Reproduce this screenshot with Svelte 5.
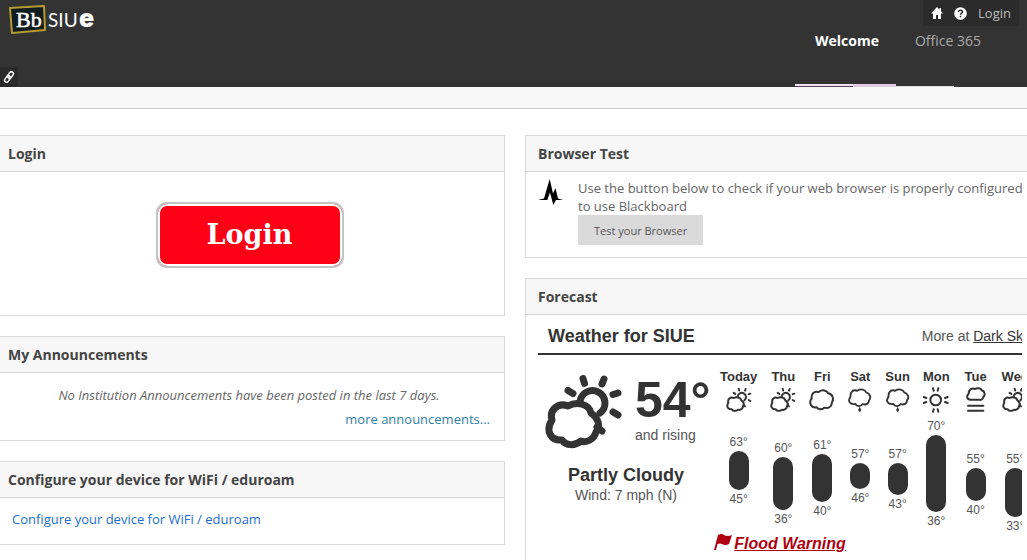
<script lang="ts">
  type Sky = 'partly' | 'cloudy' | 'rain' | 'sun' | 'fog';

  interface Day {
    name: string;
    sky: Sky;
    high: number;
    low: number;
    top: number;
    height: number;
  }

  // top and height place each temperature bar on the shared scale
  const days: Day[] = [
    { name: 'Today', sky: 'partly', high: 63, low: 45, top: 16, height: 39 },
    { name: 'Thu', sky: 'partly', high: 60, low: 36, top: 22, height: 53 },
    { name: 'Fri', sky: 'cloudy', high: 61, low: 40, top: 19, height: 48 },
    { name: 'Sat', sky: 'rain', high: 57, low: 46, top: 28, height: 26 },
    { name: 'Sun', sky: 'rain', high: 57, low: 43, top: 28, height: 32 },
    { name: 'Mon', sky: 'sun', high: 70, low: 36, top: 0, height: 77 },
    { name: 'Tue', sky: 'fog', high: 55, low: 40, top: 33, height: 33 },
    { name: 'Wed', sky: 'partly', high: 55, low: 33, top: 33, height: 49 },
  ];
</script>

{#snippet skyIcon(sky: Sky)}
  <svg class="sky {sky}" viewBox="1 0 78 74" aria-hidden="true">
    {#if sky === 'partly'}
      <path d="M36 27A12.500 12.500 0 1 1 56 38" />
      <path d="M39 3.500l1.500 5M60 4l-2 5M24 15.500l5 3M69 19.500l5-1.500M69 37l5 3" />
      <path d="M8 45C5 35 14 27 24 31C33 26 45 29 47 38C54 43 57 50 52 57C50 65 42 68 37 66C31 71 22 71 18 65C7 66 1 56 8 45Z" />
      <path d="M53 52l5 4" />
    {:else if sky === 'cloudy'}
      <path d="M9 32C7 18 17 9 30 13C40 5 55 7 58 17C70 17 77 33 70 44C69 58 58 64 47 60C39 67 28 66 24 59C8 62-1 46 9 32Z" />
    {:else if sky === 'rain'}
      <path d="M9 27C8 10 18 2 31 7C43-1 57 3 60 12C72 15 78 29 69 38C70 49 59 54 49 50C42 60 29 58 25 50C7 53-1 40 9 27Z" />
      <path class="drop" d="M39 62q8 8 0 13q-8-5 0-13Z" />
    {:else if sky === 'sun'}
      <circle cx="39" cy="37" r="16" />
      <path d="M31 2l2 7M47 2l-2 7M31 72l2-7M47 72l-2-7M3 28l8 3M3 46l8-3M75 28l-8 3M75 46l-8-3" />
    {:else}
      <path d="M18 18C18 6 27 0 36 4C46-1 55 2 57 8C67 10 68 24 62 28C61 36 53 38 49 36H25C13 37 10 25 18 18Z" />
      <path d="M16 54h46M16 69h46" />
    {/if}
  </svg>
{/snippet}

<header class="top">
  <div class="brand">
    <a class="logo" href="#home" aria-label="Blackboard SIUe">
      <svg width="100" height="32" viewBox="0 0 100 32" aria-hidden="true">
        <path d="M3 4L37 2L38 26L5 29Z" fill="#111c20" stroke="#b49a2e" stroke-width="2" stroke-linejoin="round" />
        <text class="bb" x="9" y="23">Bb</text>
        <text class="siu" x="41" y="23">SIU</text>
        <text class="big-e" x="72" y="23">e</text>
      </svg>
    </a>
    <button class="quick" aria-label="Quick links">
      <svg width="12" height="12" viewBox="0 0 12 12" aria-hidden="true">
        <g fill="none" stroke="#fff" stroke-width="1.500">
          <rect x="5.500" y="0.500" width="4" height="7" rx="2" transform="rotate(35 7.500 4)" />
          <rect x="2.500" y="4.500" width="4" height="7" rx="2" transform="rotate(35 4.500 8)" />
        </g>
      </svg>
    </button>
  </div>

  <div class="side">
    <div class="tools">
      <a href="#home" aria-label="Home">
        <svg width="12" height="12" viewBox="0 0 12 12" aria-hidden="true">
          <path d="M6 0L0 6.500H2V12H5V8H7V12H10V6.500H12L10 4.300V1H8.500V2.700Z" fill="#fff" />
        </svg>
      </a>
      <a href="#help" aria-label="Help">
        <svg width="13" height="13" viewBox="0 0 13 13" aria-hidden="true">
          <circle cx="6.500" cy="6.500" r="6.300" fill="#fff" />
          <path d="M4.500 5C4.500 2.500 8.500 2.500 8.500 5C8.500 6.300 6.500 6 6.500 7.800M6.500 8.800V10.300" fill="none" stroke="#2b2b2b" stroke-width="1.500" />
        </svg>
      </a>
      <a class="signin" href="#login">Login</a>
    </div>
    <nav class="tabs">
      <a class="active" href="#welcome">Welcome</a>
      <a href="#office">Office 365</a>
    </nav>
    <div class="stripe"><span></span><span></span><span></span></div>
  </div>
</header>
<div class="subbar"></div>

<main>
  <div class="column left">
    <section class="panel">
      <h2>Login</h2>
      <div class="login-body">
        <button class="login">Login</button>
      </div>
    </section>

    <section class="panel">
      <h2>My Announcements</h2>
      <div class="news">
        <p>No Institution Announcements have been posted in the last 7 days.</p>
        <a href="#announcements">more announcements...</a>
      </div>
    </section>

    <section class="panel">
      <h2>Configure your device for WiFi / eduroam</h2>
      <div class="wifi">
        <a href="#wifi">Configure your device for WiFi / eduroam</a>
      </div>
    </section>
  </div>

  <div class="column right">
    <section class="panel">
      <h2>Browser Test</h2>
      <div class="test">
        <svg width="26" height="26" viewBox="0 0 26 26" aria-hidden="true">
          <path d="M0 21L6 19.500L11.700 0L15 14.500L17.500 9L20 19.500L25 21H18L15.300 26L12 13.500L9.300 21Z" />
        </svg>
        <div>
          <p>Use the button below to check if your web browser is properly configured to use Blackboard</p>
          <button>Test your Browser</button>
        </div>
      </div>
    </section>

    <section class="panel">
      <h2>Forecast</h2>
      <div class="weather">
        <div class="weather-head">
          <h3>Weather for SIUE</h3>
          <span>More at <a href="#darksky">Dark Sky</a></span>
        </div>
        <div class="weather-body">
          <div class="now">
            <div class="now-top">
              {@render skyIcon('partly')}
              <div class="reading">
                <strong>54°</strong>
                <span>and rising</span>
              </div>
            </div>
            <strong class="summary">Partly Cloudy</strong>
            <span>Wind: 7 mph (N)</span>
          </div>
          <ul class="days">
            {#each days as day}
              <li>
                <strong>{day.name}</strong>
                {@render skyIcon(day.sky)}
                <div class="range" style="padding-top: {day.top}px">
                  <span>{day.high}°</span>
                  <div class="bar" style="height: {day.height}px"></div>
                  <span>{day.low}°</span>
                </div>
              </li>
            {/each}
          </ul>
        </div>
        <div class="alert">
          <a href="#flood"><svg width="18" height="16" viewBox="0 0 18 16" aria-hidden="true"><path d="M4 1Q8-1 10 1Q13 3 18 1L15 10Q11 12 8 10Q6 9 3.500 10L2 16H0Z" fill="#b0000f" /></svg>Flood Warning</a>
        </div>
      </div>
    </section>
  </div>
</main>

<style>
  :global(body) {
    margin: 0;
    background: #fff;
    color: #666;
    font: 13px/18px 'Open Sans', sans-serif;
    overflow-x: hidden;
  }

  h2, h3, p, ul {
    margin: 0;
    padding: 0;
  }

  a {
    color: inherit;
    text-decoration: none;
  }

  button {
    border: none;
    padding: 0;
    cursor: pointer;
  }

  svg {
    display: block;
  }

  .top {
    display: flex;
    justify-content: space-between;
    min-height: 87px;
    background: #333;
  }

  .brand {
    display: flex;
    flex-direction: column;
    justify-content: space-between;
    align-items: flex-start;
  }

  .logo {
    margin: 4px 0 0 7px;
  }

  .bb {
    font: 22px 'Liberation Serif', serif;
    fill: #fff;
    stroke: #fff;
    stroke-width: 0.5px;
  }

  .siu {
    font: 19px Lato, sans-serif;
    fill: #fff;
  }

  .big-e {
    font: 900 25px Inter, sans-serif;
    fill: #fff;
  }

  .quick {
    display: flex;
    align-items: center;
    justify-content: center;
    width: 18px;
    height: 20px;
    background: #2a2a2a;
  }

  .side {
    display: flex;
    flex-direction: column;
    align-items: flex-end;
  }

  .tools {
    display: flex;
    align-items: center;
    gap: 11px;
    height: 26px;
    margin-right: 8px;
    padding: 0 8px;
    background: #2b2b2b;
    box-sizing: border-box;
  }

  .signin {
    color: #bbb;
  }

  .tabs {
    display: flex;
    flex: 1;
    margin: 6px 28px 0 0;
    font-size: 14px;
    color: #aaa;
  }

  .tabs a {
    padding: 0 18px;
  }

  .tabs .active {
    color: #fff;
    font-weight: 700;
  }

  .stripe {
    display: flex;
    align-items: flex-end;
    margin-right: 73px;
  }

  .stripe span {
    width: 58px;
    height: 1px;
    border-top: 2px solid #efe4f0;
    background: #5c3b63;
  }

  .stripe span:nth-child(2) {
    width: 43px;
    border-color: #e3cbe6;
    background: #e3cbe6;
  }

  .stripe span:nth-child(3) {
    border: none;
    background: #ddd;
  }

  .subbar {
    height: 21px;
    background: #f8f8f8;
    border-bottom: 1px solid #c8c8c8;
  }

  main {
    display: grid;
    grid-template-columns: 505fr 502fr;
    gap: 20px;
    padding: 26px 0 16px;
  }

  .column {
    display: flex;
    flex-direction: column;
    gap: 20px;
    min-width: 0;
  }

  .panel {
    border: 1px solid #dadada;
  }

  .left .panel {
    border-left: none;
  }

  .right .panel {
    border-right: none;
  }

  h2 {
    padding: 8px;
    background: #f7f7f7;
    border-bottom: 1px solid #d4d4d4;
    color: #444;
    font-size: 14px;
    font-weight: 700;
    line-height: 19px;
  }

  .right h2 {
    padding-left: 12px;
  }

  .login-body {
    display: flex;
    justify-content: center;
    padding: 30px 8px 47px 3px;
  }

  .login {
    width: 188px;
    height: 66px;
    padding-bottom: 2px;
    border: 2px solid #c4c4c4;
    border-radius: 11px;
    box-shadow: inset 0 0 0 2px #fff;
    background: #fe0016;
    color: #fff;
    font: 700 27px 'DejaVu Serif', serif;
  }

  .news {
    display: flex;
    flex-direction: column;
    gap: 6px;
    padding: 13px 14px 12px 8px;
    text-align: center;
  }

  .news p {
    font-style: italic;
  }

  .news a {
    align-self: flex-end;
    color: #2f7fa8;
  }

  .wifi {
    padding: 12px 12px 16px;
    color: #1a6fd0;
  }

  .test {
    display: flex;
    gap: 14px;
    padding: 7px 0 12px 12px;
  }

  .test svg {
    flex-shrink: 0;
  }

  .test button {
    height: 30px;
    padding: 0 16px;
    background: #dadada;
    color: #555;
    font: 11px 'Open Sans', sans-serif;
  }

  .weather {
    margin: 0 5px 0 12px;
    padding-bottom: 24px;
    overflow: hidden;
    color: #555;
    font: 14px/20px 'Liberation Sans', Arial, sans-serif;
  }

  .weather-head {
    display: flex;
    justify-content: space-between;
    align-items: center;
    height: 40px;
    padding: 4px 0 0 10px;
    box-sizing: border-box;
    border-bottom: 2px solid #333;
    white-space: nowrap;
  }

  .weather-head span {
    margin-right: -8px;
  }

  .weather-head a {
    color: #333;
    text-decoration: underline;
  }

  h3 {
    color: #333;
    font-size: 18px;
  }

  .weather-body {
    display: flex;
    gap: 13px;
    padding: 12px 0 0 7px;
  }

  .now {
    display: flex;
    flex-direction: column;
    flex-shrink: 0;
    align-items: center;
    padding-top: 8px;
  }

  .now-top {
    display: flex;
    gap: 12px;
    margin-bottom: 16px;
  }

  .sky {
    width: 26px;
    height: 26px;
    fill: none;
    stroke: #333;
    stroke-width: 6;
    stroke-linecap: round;
    stroke-linejoin: round;
  }

  .sky.rain {
    width: 24px;
  }

  .sky .drop {
    fill: #333;
    stroke-width: 2;
  }

  .now .sky {
    width: 78px;
    height: 74px;
    stroke-width: 7;
  }

  .reading {
    display: flex;
    flex-direction: column;
    width: 72px;
  }

  .reading strong {
    color: #333;
    font-size: 50px;
    line-height: 50px;
  }

  .summary {
    color: #333;
    font-size: 18px;
  }

  .days {
    display: flex;
    flex-shrink: 0;
    gap: 13px;
    list-style: none;
  }

  .days li {
    display: flex;
    flex-direction: column;
    align-items: center;
  }

  .days strong {
    color: #333;
    font-size: 13px;
    line-height: 20px;
  }

  .range {
    display: flex;
    flex-direction: column;
    align-items: center;
    gap: 1px;
    font-size: 12px;
    line-height: 16px;
    margin-top: 5px;
  }

  .bar {
    width: 20px;
    border-radius: 10px;
    background: #333;
  }

  .alert {
    display: flex;
    justify-content: center;
  }

  .alert a {
    color: #b0000f;
    font-size: 16px;
    font-style: italic;
    font-weight: 700;
    text-decoration: underline;
  }

  .alert svg {
    display: inline-block;
    margin-right: 2px;
    vertical-align: -1px;
  }
</style>
